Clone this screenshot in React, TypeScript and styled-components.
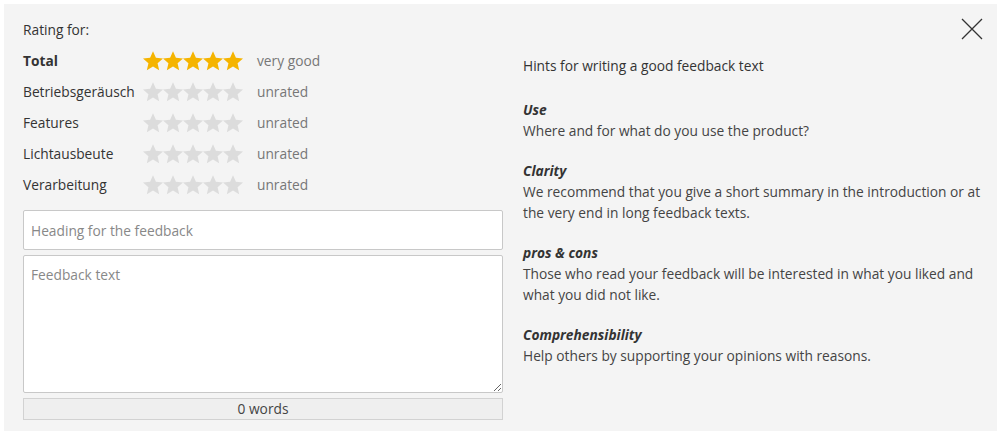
import React from "react";
import styled, { createGlobalStyle } from "styled-components";

const GlobalStyle = createGlobalStyle`
  html, body {
    margin: 0;
    padding: 0;
    background: #ffffff;
  }
  body {
    font-family: "Open Sans", "Liberation Sans", Arial, sans-serif;
    color: #333;
  }
`;

const Panel = styled.div`
  position: relative;
  margin: 4px 7px 0 4px;
  height: 427px;
  box-sizing: border-box;
  background: #f4f4f4;
  padding: 16px 10px 0 19px;
  display: flex;
  gap: 20px;
  font-size: 13.75px;
`;

const LeftColumn = styled.div`
  width: 480px;
  flex-shrink: 0;
  display: flex;
  flex-direction: column;
`;

const RightColumn = styled.div`
  flex: 1;
  padding-top: 35px;
  line-height: 21px;
`;

const Caption = styled.div`
  line-height: 20px;
  margin-bottom: 5px;
`;

const RatingRow = styled.div`
  display: flex;
  align-items: center;
  height: 31px;
`;

const RowLabel = styled.div<{ $bold?: boolean }>`
  width: 120px;
  font-weight: ${({ $bold }) => ($bold ? 700 : 400)};
`;

const Stars = styled.div`
  display: flex;
  width: 114px;
`;

const StarIcon = styled.svg`
  width: 20px;
  height: 20px;
  display: block;
`;

const RatingText = styled.div`
  color: #777;
`;

const HeadingInput = styled.input`
  margin-top: 10px;
  height: 40px;
  box-sizing: border-box;
  border: 1px solid #c8c8c8;
  border-radius: 2px;
  background: #fff;
  padding: 0 7px;
  font: inherit;
  color: #333;
  outline: none;
  &::placeholder {
    color: #888;
  }
`;

const FeedbackArea = styled.textarea`
  margin-top: 5px;
  height: 138px;
  box-sizing: border-box;
  border: 1px solid #c8c8c8;
  border-radius: 2px;
  background: #fff;
  padding: 9px 7px;
  font: inherit;
  color: #333;
  outline: none;
  resize: vertical;
  &::placeholder {
    color: #888;
  }
`;

const WordCount = styled.div`
  margin-top: 5px;
  height: 22px;
  box-sizing: border-box;
  border: 1px solid #d2d2d2;
  background: #efefef;
  text-align: center;
  line-height: 20px;
  color: #444;
`;

const HintsTitle = styled.div`
  margin-bottom: 23px;
`;

const HintBlock = styled.div`
  margin-bottom: 19px;
`;

const HintHeading = styled.div`
  font-weight: 700;
  font-style: italic;
`;

const HintText = styled.div`
  color: #444;
`;

const CloseButton = styled.button`
  position: absolute;
  top: 13px;
  right: 13px;
  width: 24px;
  height: 24px;
  padding: 0;
  border: none;
  background: transparent;
  cursor: pointer;
`;

const Star: React.FC<{ filled: boolean }> = ({ filled }) => (
  <StarIcon viewBox="1.3 1.3 21.4 21.4">
    <path
      d="M12 1.5l3.1 7.1 7.6.7-5.8 5.1 1.7 7.6L12 18l-6.6 4 1.7-7.6-5.8-5.1 7.6-.7z"
      fill={filled ? "#f5b400" : "#dcdcdc"}
    />
  </StarIcon>
);

const ratings = [
  { label: "Total", value: 5, text: "very good", bold: true },
  { label: "Betriebsgeräusch", value: 0, text: "unrated" },
  { label: "Features", value: 0, text: "unrated" },
  { label: "Lichtausbeute", value: 0, text: "unrated" },
  { label: "Verarbeitung", value: 0, text: "unrated" },
];

const hints = [
  { title: "Use", text: "Where and for what do you use the product?" },
  {
    title: "Clarity",
    text: "We recommend that you give a short summary in the introduction or at the very end in long feedback texts.",
  },
  {
    title: "pros & cons",
    text: "Those who read your feedback will be interested in what you liked and what you did not like.",
  },
  { title: "Comprehensibility", text: "Help others by supporting your opinions with reasons." },
];

const App: React.FC = () => {
  return (
    <>
      <GlobalStyle />
      <Panel>
        <LeftColumn>
          <Caption>Rating for:</Caption>
          {ratings.map((r) => (
            <RatingRow key={r.label}>
              <RowLabel $bold={r.bold}>{r.label}</RowLabel>
              <Stars>
                {[1, 2, 3, 4, 5].map((n) => (
                  <Star key={n} filled={n <= r.value} />
                ))}
              </Stars>
              <RatingText>{r.text}</RatingText>
            </RatingRow>
          ))}
          <HeadingInput placeholder="Heading for the feedback" />
          <FeedbackArea placeholder="Feedback text" />
          <WordCount>0 words</WordCount>
        </LeftColumn>
        <RightColumn>
          <HintsTitle>Hints for writing a good feedback text</HintsTitle>
          {hints.map((h) => (
            <HintBlock key={h.title}>
              <HintHeading>{h.title}</HintHeading>
              <HintText>{h.text}</HintText>
            </HintBlock>
          ))}
        </RightColumn>
        <CloseButton aria-label="Close">
          <svg width="24" height="24" viewBox="0 0 24 24">
            <path d="M2 2L22 22M22 2L2 22" stroke="#333" strokeWidth="1.3" fill="none" />
          </svg>
        </CloseButton>
      </Panel>
    </>
  );
};

export default App;
